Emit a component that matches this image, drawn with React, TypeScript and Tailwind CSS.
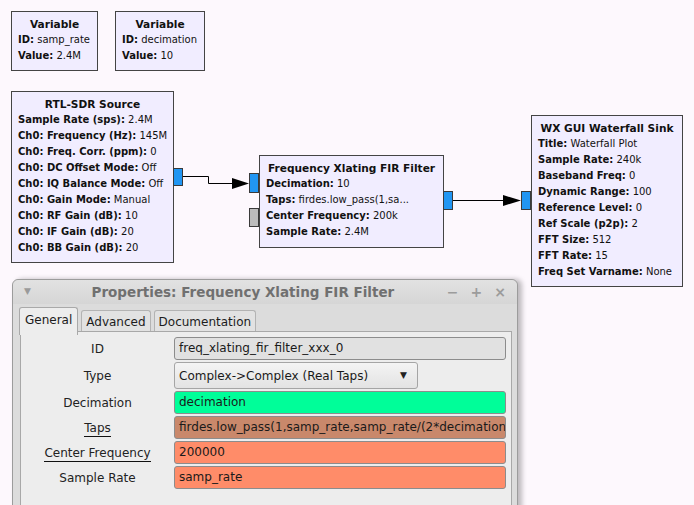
import React from "react";

const canvasFont = { fontFamily: '"DejaVu Sans", Verdana, sans-serif' };

type Row = [string, string];

function Block({ left, top, width, height, title, rows }: { left: number; top: number; width: number; height: number; title: string; rows: Row[] }) {
  return (
    <div
      className="absolute border border-[#444] bg-[#f1edff] pt-[4px] pl-[6px] pr-[4px] text-[10px] leading-[16px] text-[#111] whitespace-nowrap"
      style={{ left, top, width, height, ...canvasFont }}
    >
      <div className="text-center font-bold text-[10.6px] pr-[2px]">{title}</div>
      {rows.map(([k, v]) => (
        <div key={k}>
          <span className="font-bold">{k}:</span> {v}
        </div>
      ))}
    </div>
  );
}

function Port({ left, top, h, gray }: { left: number; top: number; h: number; gray?: boolean }) {
  return (
    <div
      className={"absolute w-[10px] border border-[#3a3a3a] " + (gray ? "bg-[#bcbcbc]" : "bg-[#2196f3]")}
      style={{ left, top, height: h }}
    />
  );
}

function Field({ value, bg }: { value: string; bg: string }) {
  return (
    <div
      className="h-[23px] rounded-[3px] border border-[#8c8c8c] pl-[4px] text-[12px] leading-[21px] text-[#1a1a1a] overflow-hidden whitespace-nowrap"
      style={{ background: bg }}
    >
      {value}
    </div>
  );
}

export default function App() {
  const props: { label: string; underline?: boolean; value: string; bg?: string; combo?: boolean }[] = [
    { label: "ID", value: "freq_xlating_fir_filter_xxx_0", bg: "#e1e1e1" },
    { label: "Type", value: "Complex->Complex (Real Taps)", combo: true },
    { label: "Decimation", value: "decimation", bg: "#00fe99" },
    { label: "Taps", underline: true, value: "firdes.low_pass(1,samp_rate,samp_rate/(2*decimation),2000)", bg: "#c9886b" },
    { label: "Center Frequency", underline: true, value: "200000", bg: "#ff8c69" },
    { label: "Sample Rate", value: "samp_rate", bg: "#ff8c69" },
  ];

  return (
    <div className="relative w-[694px] h-[505px] overflow-hidden bg-[#fdf8fd]">
      <Block left={11} top={11} width={87} height={60} title="Variable" rows={[["ID", "samp_rate"], ["Value", "2.4M"]]} />
      <Block left={115} top={11} width={90} height={60} title="Variable" rows={[["ID", "decimation"], ["Value", "10"]]} />
      <Block
        left={11}
        top={91}
        width={163}
        height={172}
        title="RTL-SDR Source"
        rows={[
          ["Sample Rate (sps)", "2.4M"],
          ["Ch0: Frequency (Hz)", "145M"],
          ["Ch0: Freq. Corr. (ppm)", "0"],
          ["Ch0: DC Offset Mode", "Off"],
          ["Ch0: IQ Balance Mode", "Off"],
          ["Ch0: Gain Mode", "Manual"],
          ["Ch0: RF Gain (dB)", "10"],
          ["Ch0: IF Gain (dB)", "20"],
          ["Ch0: BB Gain (dB)", "20"],
        ]}
      />
      <Block
        left={259}
        top={155}
        width={185}
        height={93}
        title="Frequency Xlating FIR Filter"
        rows={[
          ["Decimation", "10"],
          ["Taps", "firdes.low_pass(1,sa..."],
          ["Center Frequency", "200k"],
          ["Sample Rate", "2.4M"],
        ]}
      />
      <Block
        left={531}
        top={115}
        width={152}
        height={172}
        title="WX GUI Waterfall Sink"
        rows={[
          ["Title", "Waterfall Plot"],
          ["Sample Rate", "240k"],
          ["Baseband Freq", "0"],
          ["Dynamic Range", "100"],
          ["Reference Level", "0"],
          ["Ref Scale (p2p)", "2"],
          ["FFT Size", "512"],
          ["FFT Rate", "15"],
          ["Freq Set Varname", "None"],
        ]}
      />

      <Port left={173} top={168} h={18} />
      <Port left={249} top={173} h={20} />
      <Port left={249} top={208} h={19} gray />
      <Port left={443} top={191} h={19} />
      <Port left={521} top={191} h={19} />

      <svg className="absolute left-0 top-0" width={694} height={505}>
        <polyline points="183,176.5 208.5,176.5 208.5,183.5 234,183.5" fill="none" stroke="#000" strokeWidth={1} />
        <polygon points="232,178 249,183.5 232,189" fill="#000" />
        <line x1={453} y1={200.5} x2={505} y2={200.5} stroke="#000" strokeWidth={1} />
        <polygon points="503,195 521,200.5 503,206" fill="#000" />
      </svg>

      {/* properties dialog */}
      <div
        className="absolute left-[12px] top-[279px] w-[506px] h-[260px] rounded-t-[6px] border border-[#9c9c9c] bg-[#dcdcdc] shadow-[4px_0_5px_rgba(0,0,0,0.25)] flex flex-col"
        style={canvasFont}
      >
        <div className="h-[24px] flex items-center rounded-t-[6px] bg-gradient-to-b from-[#e2e2e2] to-[#d6d6d6]">
          <span className="w-[30px] pl-[11px] text-[9px] text-[#9a9a9a]">▼</span>
          <span className="flex-1 text-center text-[13.5px] font-bold text-[#707070] pr-[4px]">Properties: Frequency Xlating FIR Filter</span>
          <div className="flex gap-[12px] pr-[11px] text-[14px] font-bold text-[#9c9c9c]">
            <span>−</span>
            <span>+</span>
            <span>×</span>
          </div>
        </div>
        <div className="h-[30px] pt-[3px] pl-[6px] flex items-start gap-[3px] text-[12px] text-[#1c1c1c]">
          <div className="h-[28px] px-[5px] pt-[3px] rounded-t-[3px] border border-b-0 border-[#a9a9a9] bg-[#ededed] relative z-10">General</div>
          <div className="mt-[3px] h-[24px] px-[4px] pt-[2px] rounded-t-[3px] border border-b-0 border-[#b3b3b3] bg-[#e2e2e2]">Advanced</div>
          <div className="mt-[3px] h-[24px] px-[4px] pt-[2px] rounded-t-[3px] border border-b-0 border-[#b3b3b3] bg-[#e2e2e2]">Documentation</div>
        </div>
        <div className="-mt-[3px] ml-[7px] mr-[5px] flex-1 border border-[#a8a8a8] bg-[#ededed] pt-[5px] pr-[5px] flex flex-col gap-[2px] text-[12px] text-[#222]">
          {props.map((p) => (
            <div key={p.label} className="flex items-center">
              <div className="w-[153px] shrink-0 text-center">
                <span className={p.underline ? "border-b border-[#111] pb-[1px]" : ""}>{p.label}</span>
              </div>
              <div className="flex-1 min-w-0">
                {p.combo ? (
                  <div className="w-[244px] h-[27px] rounded-[3px] border border-[#a5a5a5] bg-gradient-to-b from-[#f4f4f4] to-[#e3e3e3] flex items-center pl-[4px] pr-[10px] text-[12px] text-[#1a1a1a]">
                    <span className="flex-1">{p.value}</span>
                    <span className="text-[9px] text-[#222]">▼</span>
                  </div>
                ) : (
                  <Field value={p.value} bg={p.bg!} />
                )}
              </div>
            </div>
          ))}
        </div>
      </div>
    </div>
  );
}
